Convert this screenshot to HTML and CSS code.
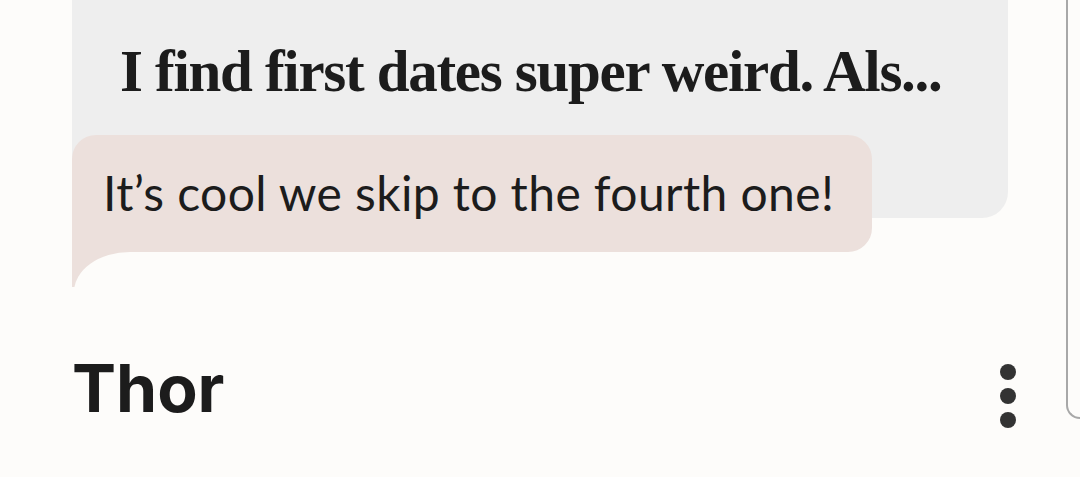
FILE: index.html
```html
<!DOCTYPE html>
<html>
<head>
<meta charset="utf-8">
<link rel="stylesheet" href="styles.css">
</head>
<body>
<div class="page">
  <div class="thread">
    <div class="prompt-card">
      <p class="prompt-text">I find first dates super weird. Als...</p>
    </div>
    <div class="reply">
      <div class="bubble">It’s cool we skip to the fourth one!</div>
      <div class="tail"></div>
    </div>
  </div>
  <div class="profile-row">
    <h1 class="name">Thor</h1>
    <div class="more" aria-label="More">
      <span class="dot"></span><span class="dot"></span><span class="dot"></span>
    </div>
  </div>
  <div class="side-frame"></div>
</div>
</body>
</html>
```

FILE: styles.css
```css
html, body {
  margin: 0;
  padding: 0;
}
body {
  background: #fdfcfa;
  width: 1080px;
  height: 477px;
  overflow: hidden;
}
.page {
  position: relative;
  width: 1080px;
  height: 477px;
}
.thread {
  padding-left: 72px;
}
.prompt-card {
  width: 936px;
  height: 218px;
  box-sizing: border-box;
  background: #eeeeee;
  border-radius: 0 0 26px 0;
  padding: 36px 0 0 48px;
}
.prompt-text {
  margin: 0;
  font-family: "Liberation Serif", serif;
  font-weight: bold;
  font-size: 59px;
  line-height: 70px;
  color: #1c1c1c;
  letter-spacing: -1.3px;
}
.reply {
  margin-top: -83px;
  position: relative;
}
.bubble {
  display: inline-block;
  background: #ece0dc;
  border-radius: 24px 24px 24px 0;
  height: 117px;
  box-sizing: border-box;
  padding: 29px 38px 0 31px;
  font-family: "Lato", sans-serif;
  font-size: 48px;
  line-height: 58px;
  letter-spacing: 0.4px;
  color: #1c1c1c;
}
.tail {
  width: 60px;
  height: 35px;
  background: #ece0dc;
  position: relative;
  overflow: hidden;
}
.tail::after {
  content: "";
  position: absolute;
  left: 2px;
  top: 0;
  width: 140px;
  height: 120px;
  background: #fdfcfa;
  border-top-left-radius: 56px 40px;
}
.profile-row {
  display: flex;
  align-items: flex-start;
  justify-content: space-between;
  padding: 61px 64px 0 72px;
}
.name {
  margin: 0;
  font-family: "Inter", sans-serif;
  font-weight: 700;
  font-size: 66px;
  line-height: 80px;
  color: #1c1c1c;
}
.more {
  display: flex;
  flex-direction: column;
  gap: 8px;
  margin-top: 16px;
}
.dot {
  width: 16px;
  height: 16px;
  border-radius: 50%;
  background: #333333;
}
.side-frame {
  position: absolute;
  left: 1066px;
  top: -20px;
  width: 40px;
  height: 437px;
  border-left: 2px solid #a8a8a8;
  border-bottom: 2px solid #a8a8a8;
  border-bottom-left-radius: 14px;
}
```
